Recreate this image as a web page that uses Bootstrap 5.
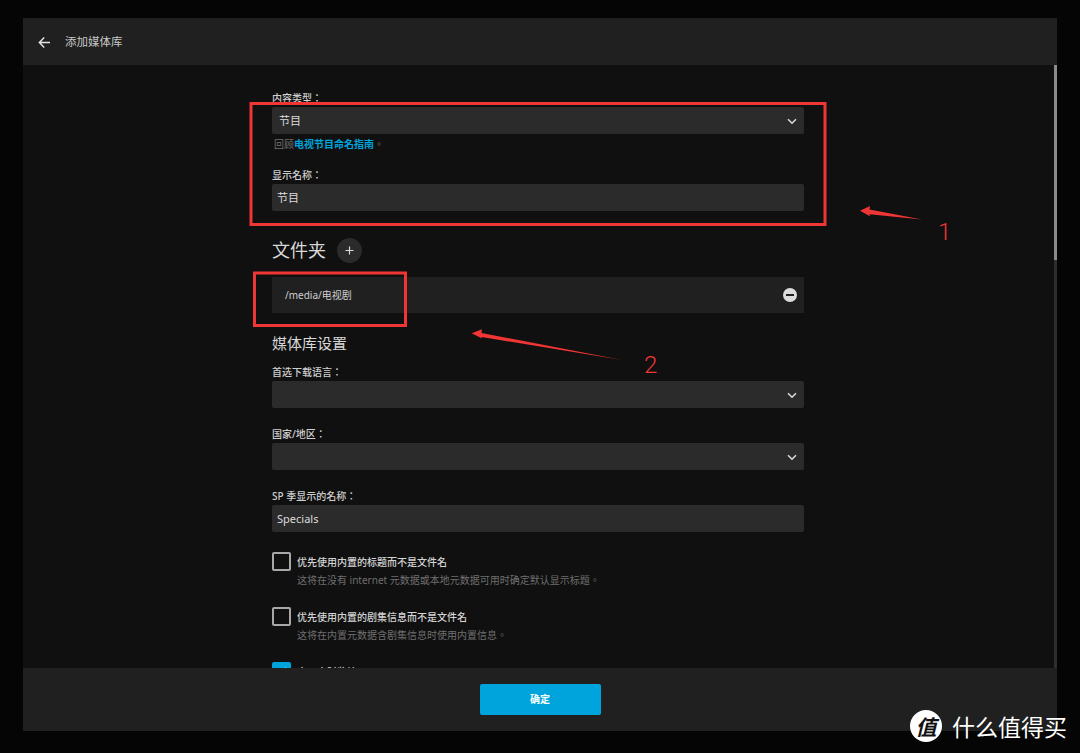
<!DOCTYPE html>
<html lang="zh-Hant">
  <head>
    <meta charset="UTF-8" />
    <meta name="viewport" content="width=device-width, initial-scale=1.0" />
    <title>添加媒体库</title>
    <link
      href="https://cdn.jsdelivr.net/npm/bootstrap@5.3.2/dist/css/bootstrap.min.css"
      rel="stylesheet"
    />
    <style>
      html,
      body {
        height: 753px;
        overflow: hidden;
      }
      body {
        background-color: #050505;
        font-family: "Noto Sans", "Noto Sans CJK TC", sans-serif;
        color: #d0d0d0;
        font-size: 10px;
        position: relative;
      }
      .page-pad {
        height: 753px;
        padding: 18px 23px 22px;
      }
      .media-dialog {
        height: 100%;
        background-color: #101010;
      }
      .dialog-head {
        height: 47px;
        background-color: #202020;
        padding: 1px 0 0 15px;
        gap: 14px;
        font-size: 11.5px;
        color: #c8c8c8;
      }
      .dialog-scroll {
        min-height: 0;
        overflow: hidden;
      }
      .form-col {
        width: 532px;
        margin-left: 249px;
        padding-top: 26px;
      }
      .dialog-rail {
        width: 3px;
        background-color: #2e2e2e;
      }
      .rail-thumb {
        height: 195px;
        background-color: #8a8a8a;
      }
      .dialog-foot {
        height: 63px;
        background-color: #202020;
      }
      .field-label {
        font-size: 10px;
        line-height: 14px;
        height: 14px;
        font-weight: 500;
        color: #cfcfcf;
        margin-bottom: 2px;
      }
      .field-box {
        height: 27px;
        background-color: #2b2b2b;
        border-radius: 2px;
        font-size: 11px;
        color: #dcdcdc;
        padding: 1px 7px 0 5px;
      }
      .field-select {
        padding-left: 7px;
      }
      .field-help {
        font-size: 10px;
        line-height: 14px;
        color: #6f6f6f;
        margin: 3px 0 0 2px;
      }
      .field-help a {
        color: #00a4dc;
        font-weight: 700;
        text-decoration: none;
      }
      .folder-title {
        font-size: 18px;
        line-height: 25px;
        font-weight: 400;
        margin: 0;
        color: #d8d8d8;
      }
      .round-add {
        width: 25px;
        height: 25px;
        border-radius: 50%;
        background-color: #2b2b2b;
      }
      .folder-row {
        height: 36px;
        background-color: #202020;
        padding: 0 7px 0 13px;
        font-size: 10px;
        color: #cfcfcf;
      }
      .section-title {
        font-size: 15px;
        line-height: 20px;
        font-weight: 400;
        margin: 0;
        color: #d8d8d8;
      }
      .name-gap {
        margin-top: 17px;
      }
      .folder-head {
        margin-top: 27px;
        margin-bottom: 14px;
        gap: 11px;
      }
      .lib-title {
        margin-top: 20px;
      }
      .lang-label {
        margin-top: 12px;
      }
      .area-label {
        margin-top: 19px;
      }
      .tick-row {
        gap: 6px;
        margin-top: 20px;
      }
      .tick-box {
        width: 19px;
        height: 19px;
        border: 2px solid #a8a8a8;
        border-radius: 2px;
        flex-shrink: 0;
      }
      .tick-box.is-on {
        background-color: #00a4dc;
        border-color: #00a4dc;
      }
      .tick-title {
        font-size: 10px;
        line-height: 14px;
        font-weight: 500;
        color: #d4d4d4;
        margin-top: 3px;
      }
      .tick-desc {
        font-size: 10px;
        line-height: 14px;
        color: #6f6f6f;
        margin-top: 4px;
      }
      .ok-btn {
        width: 121px;
        height: 31px;
        background-color: #00a4dc;
        border: 0;
        border-radius: 2px;
        color: #fff;
        font-size: 10px;
        font-weight: 700;
        padding: 0;
      }
      .ok-btn:hover {
        background-color: #00a4dc;
        color: #fff;
      }
      .mark-layer {
        position: absolute;
        top: 0;
        left: 0;
        pointer-events: none;
      }
      .mark-num {
        position: absolute;
        color: #f03535;
        font-size: 24px;
        line-height: 24px;
        font-weight: 300;
        font-family: Roboto, sans-serif;
      }
      .mark-one {
        left: 938px;
        top: 220px;
      }
      .mark-two {
        left: 644px;
        top: 353px;
      }
      .zdm-stamp {
        position: absolute;
        left: 910px;
        top: 710px;
        gap: 10px;
      }
      .zdm-logo {
        width: 32px;
        height: 32px;
        border-radius: 50%;
        background-color: #fff;
        color: #111;
        font-family: "Noto Sans CJK SC", sans-serif;
        font-size: 21px;
        line-height: 32px;
        font-weight: 700;
        font-style: italic;
        text-align: center;
      }
      .zdm-name {
        color: #fff;
        font-family: "Noto Sans CJK SC", sans-serif;
        font-size: 23px;
        line-height: 32px;
        white-space: nowrap;
      }
    </style>
  </head>
  <body>
    <div class="page-pad">
      <div class="media-dialog d-flex flex-column">
        <div class="dialog-head d-flex align-items-center flex-shrink-0">
          <svg width="13" height="13" viewBox="0 0 13 13" fill="none" stroke="#e4e4e4" stroke-width="1.5">
            <path d="M12 6.5H1.5M6.2 1.6 1.4 6.5l4.8 4.9" />
          </svg>
          <span lang="zh-CN">添加媒体库</span>
        </div>

        <div class="dialog-scroll d-flex flex-grow-1">
          <div class="flex-grow-1 overflow-hidden">
            <div class="form-col">
              <label class="field-label d-block">内容类型：</label>
              <div class="field-box field-select d-flex align-items-center justify-content-between">
                <span>节目</span>
                <svg width="10" height="7" viewBox="0 0 10 7" fill="none" stroke="#d8d8d8" stroke-width="1.6">
                  <path d="M1 1.2 5 5.2l4-4" />
                </svg>
              </div>
              <p class="field-help">回顾<a href="#">电视节目命名指南</a>。</p>

              <label class="field-label d-block name-gap">显示名称：</label>
              <div class="field-box d-flex align-items-center"><span>节目</span></div>

              <div class="d-flex align-items-center folder-head">
                <h2 class="folder-title">文件夹</h2>
                <div class="round-add d-flex align-items-center justify-content-center">
                  <svg width="9" height="9" viewBox="0 0 9 9" stroke="#d8d8d8" stroke-width="1.2">
                    <path d="M4.5 0.5v8M0.5 4.5h8" />
                  </svg>
                </div>
              </div>

              <div class="folder-row d-flex align-items-center justify-content-between">
                <span>/media/电视剧</span>
                <svg width="14" height="14" viewBox="0 0 14 14">
                  <circle cx="7" cy="7" r="7" fill="#dcdcdc" />
                  <rect x="3" y="6" width="8" height="2" fill="#202020" />
                </svg>
              </div>

              <h3 class="section-title lib-title">媒体库设置</h3>

              <label class="field-label d-block lang-label">首选下载语言：</label>
              <div class="field-box d-flex align-items-center justify-content-end">
                <svg width="10" height="7" viewBox="0 0 10 7" fill="none" stroke="#d8d8d8" stroke-width="1.6">
                  <path d="M1 1.2 5 5.2l4-4" />
                </svg>
              </div>

              <label class="field-label d-block area-label">国家/地区：</label>
              <div class="field-box d-flex align-items-center justify-content-end">
                <svg width="10" height="7" viewBox="0 0 10 7" fill="none" stroke="#d8d8d8" stroke-width="1.6">
                  <path d="M1 1.2 5 5.2l4-4" />
                </svg>
              </div>

              <label class="field-label d-block area-label">SP 季显示的名称：</label>
              <div class="field-box d-flex align-items-center"><span>Specials</span></div>

              <div class="d-flex tick-row">
                <div class="tick-box"></div>
                <div>
                  <div class="tick-title">优先使用内置的标题而不是文件名</div>
                  <div class="tick-desc">这将在没有 internet 元数据或本地元数据可用时确定默认显示标题。</div>
                </div>
              </div>

              <div class="d-flex tick-row">
                <div class="tick-box"></div>
                <div>
                  <div class="tick-title">优先使用内置的剧集信息而不是文件名</div>
                  <div class="tick-desc">这将在内置元数据含剧集信息时使用内置信息。</div>
                </div>
              </div>

              <div class="d-flex tick-row">
                <div class="tick-box is-on d-flex align-items-center justify-content-center">
                  <svg width="13" height="13" viewBox="0 0 13 13" fill="none" stroke="#fff" stroke-width="2">
                    <path d="M2 6.5 5 9.5 11 3" />
                  </svg>
                </div>
                <div class="tick-title">启用实时监控</div>
              </div>
            </div>
          </div>
          <div class="dialog-rail flex-shrink-0"><div class="rail-thumb"></div></div>
        </div>

        <div class="dialog-foot d-flex align-items-center justify-content-center flex-shrink-0">
          <button type="button" class="btn ok-btn">确定</button>
        </div>
      </div>
    </div>

    <!-- red annotations drawn over the screenshot -->
    <svg class="mark-layer" width="1080" height="753" fill="none">
      <rect x="251" y="103.5" width="574" height="121" stroke="#f03535" stroke-width="3" />
      <rect x="254.5" y="273" width="151" height="52.5" stroke="#f03535" stroke-width="3" />
      <path d="M860 210.7 870 206l-.5 3.5L922 219.5l-52.5-5.2.5 2z" fill="#f03535" />
      <path d="M471.7 333.3 482 329.3l-.5 3.7L622 360l-140.5-23 .5 1.5z" fill="#f03535" />
    </svg>
    <span class="mark-num mark-one">1</span>
    <span class="mark-num mark-two">2</span>

    <div class="zdm-stamp d-flex align-items-center" lang="zh-CN">
      <div class="zdm-logo">值</div>
      <div class="zdm-name">什么值得买</div>
    </div>
  </body>
</html>
